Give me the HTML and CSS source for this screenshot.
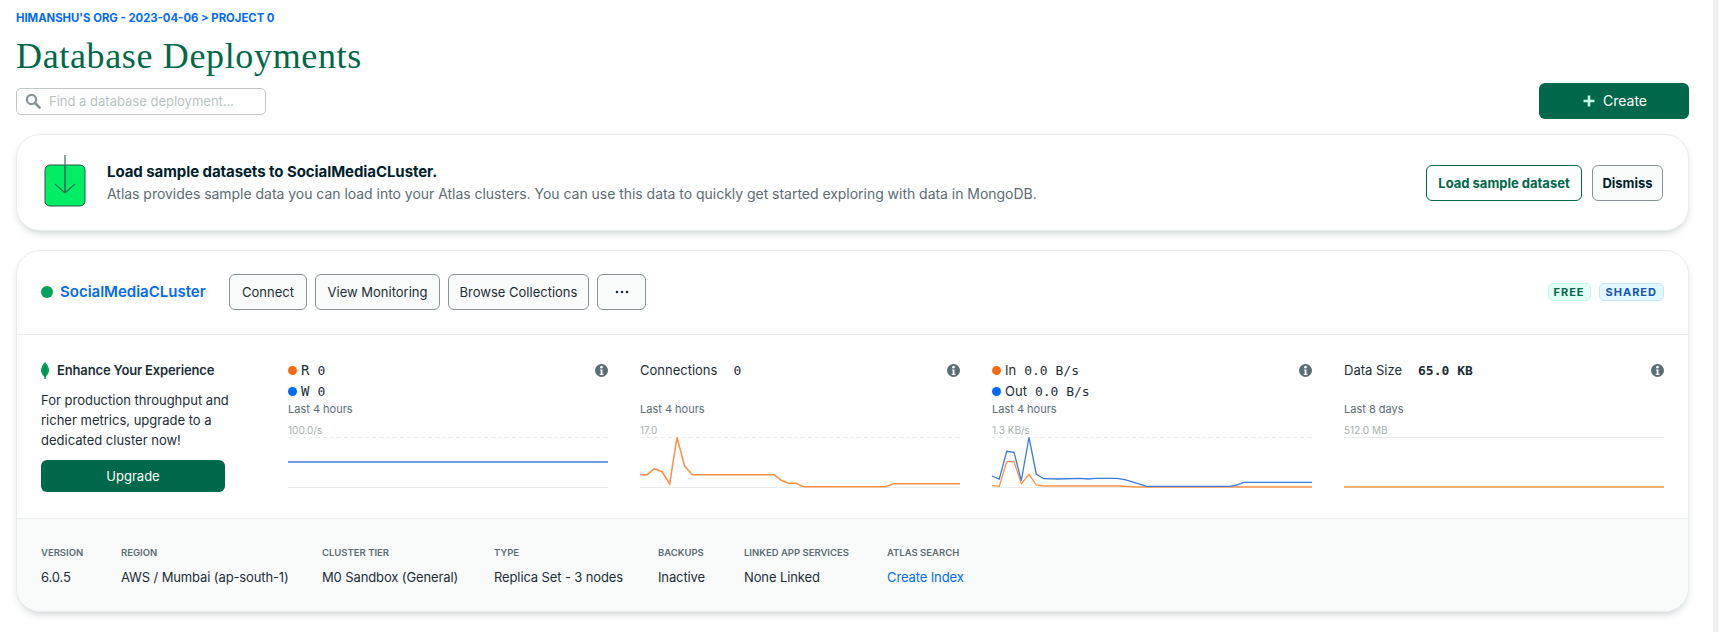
FILE: index.html
```html
<!DOCTYPE html>
<html lang="en">
<head>
<meta charset="utf-8">
<title>Database Deployments</title>
<link rel="stylesheet" href="styles.css">
</head>
<body>
<div class="page">
<main class="main">
  <div class="crumbs">HIMANSHU'S ORG - 2023-04-06 &gt; PROJECT 0</div>
  <h1 class="title">Database Deployments</h1>
  <div class="toolbar">
    <label class="search">
      <svg class="search-icon" viewBox="0 0 16 16"><circle cx="6.5" cy="6.5" r="4.6" fill="none" stroke="#889397" stroke-width="2.2"/><path d="M10 10l4.6 4.6" stroke="#889397" stroke-width="2.6" stroke-linecap="round"/></svg>
      <input class="search-input" type="text" placeholder="Find a database deployment...">
    </label>
    <button class="btn-create"><svg class="plus" viewBox="0 0 12 12"><path d="M6 0.5v11M0.5 6h11" stroke="#C0FAE6" stroke-width="2.6"/></svg>Create</button>
  </div>

  <section class="banner">
    <svg class="banner-icon" viewBox="0 0 44 54"><rect x="2" y="12" width="40" height="41" rx="5" fill="#00ED64" stroke="#1C5A4A" stroke-width="1"/><path d="M22 2v38" stroke="#5C7A7A" stroke-width="1.4"/><path d="M12 31l10 9 10-9" fill="none" stroke="#0E7B5C" stroke-width="1.2"/><path d="M22 12v28" stroke="#0E7B5C" stroke-width="1.4"/></svg>
    <div class="banner-text">
      <div class="banner-title">Load sample datasets to SocialMediaCLuster.</div>
      <div class="banner-desc">Atlas provides sample data you can load into your Atlas clusters. You can use this data to quickly get started exploring with data in MongoDB.</div>
    </div>
    <button class="btn btn-outline-green">Load sample dataset</button>
    <button class="btn btn-bold">Dismiss</button>
  </section>

  <section class="cluster">
    <header class="cluster-head">
      <span class="status-dot"></span>
      <a class="cluster-name">SocialMediaCLuster</a>
      <div class="actions">
        <button class="btn">Connect</button>
        <button class="btn">View Monitoring</button>
        <button class="btn">Browse Collections</button>
        <button class="btn btn-more"><svg class="dots" viewBox="0 0 14 4"><circle cx="2" cy="2" r="1.3"/><circle cx="7" cy="2" r="1.3"/><circle cx="12" cy="2" r="1.3"/></svg></button>
      </div>
      <div class="tags">
        <span class="tag tag-free">FREE</span>
        <span class="tag tag-shared">SHARED</span>
      </div>
    </header>

    <div class="metrics">
      <aside class="upsell">
        <div class="upsell-title">
          <svg class="leaf" viewBox="0 0 8 17"><path d="M4 0C4 0 8 4 8 8.5 8 12 5 14 4.6 15L4.4 17H3.6L3.4 15C3 14 0 12 0 8.5 0 4 4 0 4 0Z" fill="#00A35C"/><path d="M4 3v14" stroke="#00684A" stroke-width=".8"/></svg>
          Enhance Your Experience
        </div>
        <p class="upsell-text">For production throughput and richer metrics, upgrade to a dedicated cluster now!</p>
        <button class="btn-upgrade">Upgrade</button>
      </aside>

      <div class="chart-grid">
        <article class="metric">
          <div class="metric-head">
            <div class="legend">
              <div class="legend-row"><span class="ldot ldot-orange"></span><span class="mono-label">R</span><span class="mono">0</span></div>
              <div class="legend-row"><span class="ldot ldot-blue"></span><span class="mono-label">W</span><span class="mono">0</span></div>
            </div>
            <svg class="info" viewBox="1 1 12 12"><circle cx="7" cy="7" r="6" fill="#5C6C75"/><circle cx="7" cy="3.9" r="1.2" fill="#fff"/><path d="M5.6 6h2.3v4.1h.9v1H5.4v-1h.9V7h-.7z" fill="#fff"/></svg>
          </div>
          <div class="range">Last 4 hours</div>
          <div class="axis">100.0/s</div>
          <svg class="plot" viewBox="0 0 320 51">
            <path class="grid-dash" d="M0 .5H320"/><path class="grid-base" d="M0 50.5H320"/>
            <path class="line-blue" d="M0 25H320"/>
          </svg>
        </article>

        <article class="metric">
          <div class="metric-head">
            <div class="legend">
              <div class="legend-row">Connections<span class="mono mono-gap">0</span></div>
            </div>
            <svg class="info" viewBox="1 1 12 12"><circle cx="7" cy="7" r="6" fill="#5C6C75"/><circle cx="7" cy="3.9" r="1.2" fill="#fff"/><path d="M5.6 6h2.3v4.1h.9v1H5.4v-1h.9V7h-.7z" fill="#fff"/></svg>
          </div>
          <div class="range">Last 4 hours</div>
          <div class="axis">17.0</div>
          <svg class="plot" viewBox="0 0 320 51">
            <path class="grid-dash" d="M0 .5H320"/><path class="grid-base" d="M0 50.5H320"/>
            <path class="line-orange" d="M0 37.7L7.3 37.7 14.3 31.7 22 34.7 29.7 46.7 37 .5 44.7 29.3 52.3 37.7 134 37.7 141.3 43.3 148.3 46.3 156 46.3 163.3 49.7 245.7 49.7 253.3 46.7 320 46.7"/>
          </svg>
        </article>

        <article class="metric">
          <div class="metric-head">
            <div class="legend">
              <div class="legend-row"><span class="ldot ldot-orange"></span>In<span class="mono">0.0 B/s</span></div>
              <div class="legend-row"><span class="ldot ldot-blue"></span>Out<span class="mono">0.0 B/s</span></div>
            </div>
            <svg class="info" viewBox="1 1 12 12"><circle cx="7" cy="7" r="6" fill="#5C6C75"/><circle cx="7" cy="3.9" r="1.2" fill="#fff"/><path d="M5.6 6h2.3v4.1h.9v1H5.4v-1h.9V7h-.7z" fill="#fff"/></svg>
          </div>
          <div class="range">Last 4 hours</div>
          <div class="axis">1.3 KB/s</div>
          <svg class="plot" viewBox="0 0 320 51">
            <path class="grid-dash" d="M0 .5H320"/><path class="grid-base" d="M0 50.5H320"/>
            <path class="line-orange line-thin" d="M0 48.7L7.3 49.3 14.7 24.7 22 24.7 29.3 46.7 37 37.3 44.3 48 51.7 49 128 49 144.7 50 320 50"/>
            <path class="line-blue line-thin" d="M0 39L7.3 42 14.7 14.3 22 15.3 29.3 43.7 37 .5 44.3 37 51.7 41.7 66.3 42 88 41.3 96.3 42 103 41.3 124.7 41.3 133 42.7 154.7 49.3 238 49.3 244.7 48 252 45.3 320 45.3"/>
          </svg>
        </article>

        <article class="metric">
          <div class="metric-head">
            <div class="legend">
              <div class="legend-row">Data Size<span class="mono mono-gap mono-bold">65.0 KB</span></div>
            </div>
            <svg class="info" viewBox="1 1 12 12"><circle cx="7" cy="7" r="6" fill="#5C6C75"/><circle cx="7" cy="3.9" r="1.2" fill="#fff"/><path d="M5.6 6h2.3v4.1h.9v1H5.4v-1h.9V7h-.7z" fill="#fff"/></svg>
          </div>
          <div class="range">Last 8 days</div>
          <div class="axis">512.0 MB</div>
          <svg class="plot" viewBox="0 0 320 51">
            <path class="grid-base" d="M0 .5H320"/>
            <path class="line-orange" d="M0 50H320"/>
          </svg>
        </article>
      </div>
    </div>

    <footer class="specs">
      <div class="spec"><div class="spec-label">VERSION</div><div class="spec-value">6.0.5</div></div>
      <div class="spec"><div class="spec-label">REGION</div><div class="spec-value">AWS / Mumbai (ap-south-1)</div></div>
      <div class="spec"><div class="spec-label">CLUSTER TIER</div><div class="spec-value">M0 Sandbox (General)</div></div>
      <div class="spec"><div class="spec-label">TYPE</div><div class="spec-value">Replica Set - 3 nodes</div></div>
      <div class="spec"><div class="spec-label">BACKUPS</div><div class="spec-value">Inactive</div></div>
      <div class="spec"><div class="spec-label">LINKED APP SERVICES</div><div class="spec-value">None Linked</div></div>
      <div class="spec"><div class="spec-label">ATLAS SEARCH</div><div class="spec-value spec-link">Create Index</div></div>
    </footer>
  </section>
</main>
<div class="edge"></div>
</div>
</body>
</html>
```

FILE: styles.css
```css
* { box-sizing: border-box; }
html, body { margin: 0; height: 632px; overflow: hidden; background: #fff; }
body { font-family: Inter, "Liberation Sans", sans-serif; font-size: 13px; color: #1C2D38; }
button { font-family: inherit; cursor: pointer; }

.page { display: flex; height: 632px; }
.main { width: 1713px; flex: none; padding: 10px 24px 0 16px; }
.edge { flex: 1; background: #f0f0f0; }

.crumbs { font-size: 11.3px; line-height: 16px; font-weight: 700; color: #016BF8; }
.title { margin: 10px 0 7px; font-family: "Liberation Serif", serif; font-weight: 400; font-size: 36px; line-height: 40px; color: #00684A; letter-spacing: .65px; }

.toolbar { display: flex; align-items: center; justify-content: space-between; height: 36px; }
.search { display: flex; align-items: center; width: 250px; height: 27px; padding: 0 8px; gap: 8px; background: #fff; border: 1px solid #C1C7C6; border-radius: 5px; }
.search-icon { width: 16px; height: 16px; flex: none; }
.search-input { flex: 1; min-width: 0; border: 0; outline: 0; padding: 0; font: 13px Inter, sans-serif; color: #1C2D38; background: transparent; }
.search-input::placeholder { color: #B8C4C2; opacity: 1; }
.btn-create { display: flex; align-items: center; justify-content: center; gap: 8px; width: 150px; height: 36px; padding: 0 0 1px 2px; border: 0; border-radius: 6px; background: #00684A; color: #fff; font-size: 14px; font-weight: 400; }
.plus { width: 12px; height: 12px; }

.banner { display: flex; align-items: center; height: 97px; margin-top: 15px; padding: 0 25px 0 26px; border: 1px solid #E8EDEB; border-radius: 24px; background: #fff; box-shadow: 0 4px 10px -4px rgba(0,30,43,.3); }
.banner-icon { width: 44px; height: 54px; flex: none; margin-top: -6px; }
.banner-text { flex: 1; margin-left: 20px; }
.banner-title { font-size: 15px; line-height: 20px; font-weight: 700; letter-spacing: -.07px; color: #001E2B; }
.banner-desc { font-size: 14px; line-height: 20px; letter-spacing: -.03px; color: #5C6C75; margin-top: 2px; }

.btn { height: 36px; padding: 0; border: 1px solid #889397; border-radius: 6px; background: #F9FBFA; color: #1C2D38; font-size: 13px; font-weight: 400; white-space: nowrap; }
.btn-outline-green { width: 156px; margin-right: 10px; background: #fff; border-color: #00684A; color: #00684A; font-weight: 700; }
.btn-bold { width: 71px; font-weight: 700; color: #001E2B; }

.cluster { margin-top: 19px; height: 362px; border: 1px solid #E8EDEB; border-radius: 24px; background: #fff; box-shadow: 0 4px 10px -4px rgba(0,30,43,.3); overflow: hidden; }
.cluster-head { display: flex; align-items: center; height: 84px; padding: 0 24px 2px; border-bottom: 1px solid #E8EDEB; }
.status-dot { width: 12px; height: 12px; border-radius: 50%; background: #00A35C; flex: none; }
.cluster-name { width: 145px; margin: 0 24px 0 7px; font-size: 15px; line-height: 20px; font-weight: 600; color: #016BF8; white-space: nowrap; }
.actions { display: grid; grid-template-columns: 78px 125px 141px 49px; gap: 8px; flex: 1; }
.btn-more { display: flex; align-items: center; justify-content: center; }
.dots { width: 14px; height: 4px; fill: #1C2D38; }
.tags { display: flex; gap: 8px; }
.tag { display: flex; align-items: center; justify-content: center; height: 18px; padding: 0 6px; border: 1px solid; border-radius: 5px; font-size: 11px; font-weight: 700; letter-spacing: 1px; }
.tag-free { width: 43px; padding: 0; background: #E3FCF7; border-color: #C0FAE6; color: #00684A; }
.tag-shared { background: #E1F7FF; border-color: #C3E7FE; color: #1254B7; }

.metrics { display: flex; height: 183px; padding: 25px 0 0 24px; }
.upsell { width: 200px; margin-right: 47px; flex: none; }
.upsell-title { display: flex; align-items: center; gap: 8px; height: 20px; font-size: 13px; font-weight: 600; letter-spacing: -.15px; color: #1C2D38; white-space: nowrap; }
.leaf { width: 8px; height: 17px; flex: none; }
.upsell-text { margin: 10px 0 10px; font-size: 13px; line-height: 20px; color: #1C2D38; }
.btn-upgrade { width: 184px; height: 32px; border: 0; border-radius: 6px; background: #00684A; color: #fff; font-size: 13px; }

.chart-grid { display: grid; grid-template-columns: repeat(4, 320px); gap: 32px; }
.metric { width: 320px; }
.metric-head { display: flex; justify-content: space-between; height: 42px; }
.legend-row { display: flex; align-items: baseline; height: 21px; line-height: 21px; font-size: 13px; color: #1C2D38; }
.ldot { width: 9px; height: 9px; border-radius: 50%; margin-right: 4px; flex: none; align-self: center; }
.ldot-orange { background: #FA6A14; }
.ldot-blue { background: #016BF8; }
.mono-label { font-family: "DejaVu Sans Mono", monospace; font-size: 14px; }
.mono { margin-left: 8px; font-family: "DejaVu Sans Mono", monospace; font-size: 13px; color: #1C2D38; white-space: pre; }
.mono-gap { margin-left: 16px; }
.mono-bold { font-weight: 700; }
.info { width: 13px; height: 13px; margin-top: 4px; flex: none; }
.range { height: 14px; margin-top: 0; font-size: 11px; line-height: 14px; color: #5C6C75; }
.axis { height: 14px; margin-top: 7px; font-size: 10px; line-height: 14px; color: #A7B0AF; }
.plot { display: block; width: 320px; height: 51px; overflow: visible; }
.grid-dash { stroke: #E8EDEB; stroke-width: 1; stroke-dasharray: 4 3; fill: none; }
.grid-base { stroke: #E8EDEB; stroke-width: 1; fill: none; }
.line-orange { stroke: #FF9248; stroke-width: 1.6; fill: none; }
.line-blue { stroke: #3B7BE0; stroke-width: 1.6; fill: none; }
.line-thin { stroke-width: 1.3; }

.specs { display: grid; grid-template-columns: 80px 201px 172px 164px 86px 143px 1fr; height: 94px; padding: 26px 0 0 24px; border-top: 1px solid #E8EDEB; background: #F9FBFA; }
.spec-label { font-size: 9.5px; line-height: 16px; font-weight: 600; color: #5C6C75; white-space: nowrap; }
.spec-value { margin-top: 6px; font-size: 13px; line-height: 20px; letter-spacing: -.12px; color: #1C2D38; white-space: nowrap; }
.spec-link { color: #016BF8; }
```
